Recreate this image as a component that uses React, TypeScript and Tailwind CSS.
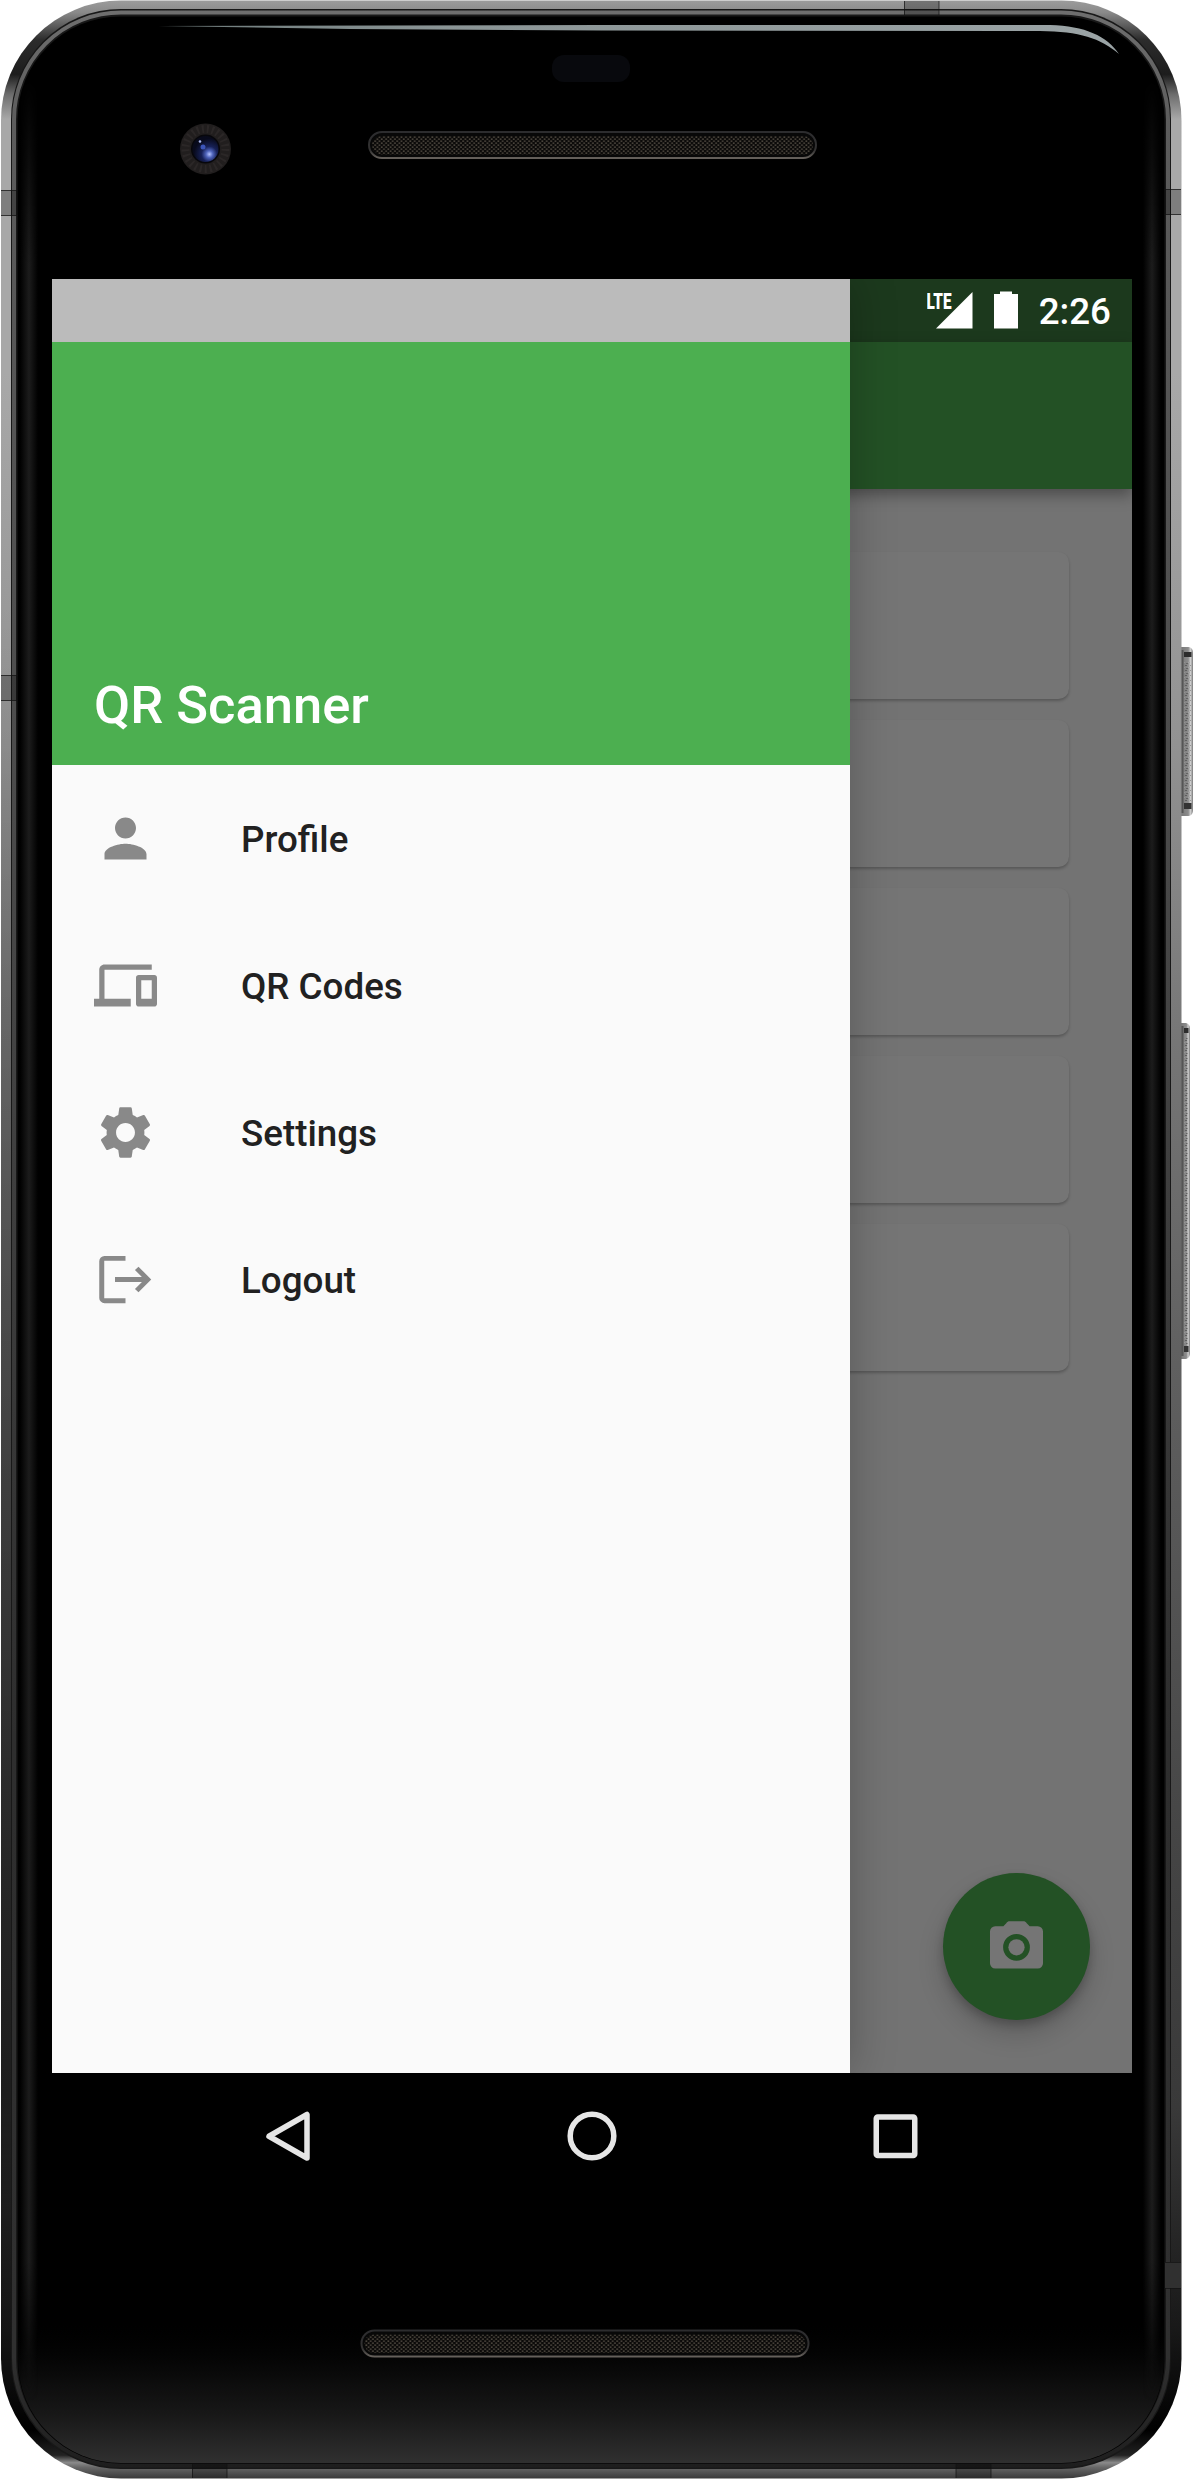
import React from "react";
import { MdPerson, MdDevices, MdSettings } from "react-icons/md";

function LogoutIcon() {
  return (
    <svg viewBox="0 0 24 24" className="size-[63px]" fill="currentColor">
      <path d="M12 3H4a2 2 0 0 0-2 2v14a2 2 0 0 0 2 2h8v-1.9H3.900V4.900H12z" />
      <path d="M16.95 7.1 21.8 12l-4.85 4.9-1.35-1.3 2.65-2.650H8v-1.900h10.250L15.6 8.4z" />
    </svg>
  );
}

function CameraIcon() {
  return (
    <svg viewBox="0 0 24 24" className="size-[63px] text-[#757575]" fill="currentColor">
      <path
        fillRule="evenodd"
        d="M9.4 2.4h5.2c.6 0 .9.2 1.3.7l1.1 1.2h3.1a2 2 0 0 1 2 2v12.1a2 2 0 0 1-2 2H3.9a2 2 0 0 1-2-2V6.300a2 2 0 0 1 2-2H7l1.100-1.200c.4-.5.7-.7 1.300-.7zM12 7.200a5.100 5.100 0 1 0 0 10.200a5.100 5.100 0 1 0 0-10.200z"
      />
      <circle cx="12" cy="12.300" r="3.100" />
    </svg>
  );
}

const items = [
  { label: "Profile", icon: <MdPerson className="size-[63px]" /> },
  { label: "QR Codes", icon: <MdDevices className="size-[63px]" /> },
  { label: "Settings", icon: <MdSettings className="size-[63px]" /> },
  { label: "Logout", icon: <LogoutIcon /> },
];

function Speaker({ x, y }: { x: number; y: number }) {
  return (
    <g>
      <rect x={x + 1} y={y + 1} width="447" height="26" rx="13" fill="#080808" stroke="url(#lip)" strokeWidth="2" />
      <rect x={x + 4} y={y + 5} width="441" height="18.500" rx="9" fill="#0b0a09" />
      <rect x={x + 4} y={y + 5} width="441" height="18.500" rx="9" fill="url(#mesh)" />
    </g>
  );
}

function SideButton({ y, h, w }: { y: number; h: number; w: number }) {
  return (
    <g>
      <path d={`M1181 ${y}h${w - 4}q4 1 4 6v${h - 12}q0 5 -4 6h-${w - 4}z`} fill="url(#btn)" />
      <rect x="1181" y={y + 3} width="2.500" height={h - 6} fill="#555" />
      <rect x="1184.500" y={y + 15} width={w - 6} height={h - 30} fill="url(#grain)" />
      <rect x="1184" y={y + 5} width={w - 4.5} height="5" fill="#2c2c2c" />
      <rect x="1184" y={y + h - 13} width={w - 4.5} height="6" fill="#333" />
    </g>
  );
}

function DeviceFrame() {
  return (
    <svg viewBox="0 0 1194 2480" className="absolute inset-0 h-[2480px] w-[1194px]" aria-hidden="true">
      <defs>
        <linearGradient id="rim" gradientUnits="userSpaceOnUse" x1="0" y1="0" x2="0" y2="2480">
          <stop offset="0" stopColor="#9c9c9c" />
          <stop offset="0.005" stopColor="#8a8a8a" />
          <stop offset="0.016" stopColor="#2c2c2c" />
          <stop offset="0.030" stopColor="#1d1d1d" />
          <stop offset="0.038" stopColor="#6c6c6c" />
          <stop offset="0.048" stopColor="#a8a8a8" />
          <stop offset="0.150" stopColor="#a8a8a8" />
          <stop offset="0.300" stopColor="#929292" />
          <stop offset="0.420" stopColor="#767676" />
          <stop offset="0.550" stopColor="#606060" />
          <stop offset="0.750" stopColor="#444" />
          <stop offset="0.850" stopColor="#393939" />
          <stop offset="0.940" stopColor="#181818" />
          <stop offset="0.980" stopColor="#000" />
          <stop offset="0.990" stopColor="#222" />
          <stop offset="0.993" stopColor="#8a8a8a" />
          <stop offset="0.995" stopColor="#666" />
          <stop offset="1" stopColor="#333" />
        </linearGradient>
        <linearGradient id="leftShade" gradientUnits="userSpaceOnUse" x1="0" y1="600" x2="0" y2="2360">
          <stop offset="0" stopColor="#000" stopOpacity="0" />
          <stop offset="0.500" stopColor="#000" stopOpacity="0.300" />
          <stop offset="0.850" stopColor="#000" stopOpacity="0.500" />
          <stop offset="1" stopColor="#000" stopOpacity="0.100" />
        </linearGradient>
        <linearGradient id="ring" gradientUnits="userSpaceOnUse" x1="0" y1="0" x2="0" y2="2480">
          <stop offset="0" stopColor="#707070" />
          <stop offset="0.050" stopColor="#5c5c5c" />
          <stop offset="0.300" stopColor="#4c4c4c" />
          <stop offset="0.700" stopColor="#2e2e2e" />
          <stop offset="0.950" stopColor="#303030" />
          <stop offset="1" stopColor="#1c1c1c" />
        </linearGradient>
        <linearGradient id="sheen" x1="0" y1="0" x2="1" y2="0">
          <stop offset="0" stopColor="#1c1c1c" stopOpacity="0" />
          <stop offset="0.500" stopColor="#1c1c1c" />
          <stop offset="1" stopColor="#1c1c1c" stopOpacity="0" />
        </linearGradient>
        <linearGradient id="sheenFade" x1="0" y1="0" x2="0" y2="1">
          <stop offset="0" stopColor="#000" />
          <stop offset="0.080" stopColor="#fff" />
          <stop offset="0.940" stopColor="#fff" />
          <stop offset="1" stopColor="#000" />
        </linearGradient>
        <mask id="sheenMask" maskUnits="userSpaceOnUse" x="0" y="0" width="1194" height="2480">
          <rect x="0" y="80" width="1194" height="2320" fill="url(#sheenFade)" />
        </mask>
        <linearGradient id="chin" x1="0" y1="0" x2="0" y2="1">
          <stop offset="0" stopColor="#000" stopOpacity="0" />
          <stop offset="0.300" stopColor="#060606" />
          <stop offset="0.650" stopColor="#171717" />
          <stop offset="1" stopColor="#303030" />
        </linearGradient>
        <linearGradient id="lip" x1="0" y1="0" x2="0" y2="1">
          <stop offset="0" stopColor="#2c2c2e" />
          <stop offset="0.700" stopColor="#333232" />
          <stop offset="1" stopColor="#65605b" />
        </linearGradient>
        <linearGradient id="btn" x1="0" y1="0" x2="1" y2="0">
          <stop offset="0" stopColor="#777" />
          <stop offset="0.600" stopColor="#8c8c8c" />
          <stop offset="0.800" stopColor="#d0d0d0" />
          <stop offset="1" stopColor="#777" />
        </linearGradient>
        <linearGradient id="glint" x1="0" y1="0" x2="1" y2="0">
          <stop offset="0" stopColor="#6d7a7a" />
          <stop offset="0.300" stopColor="#8a9495" />
          <stop offset="1" stopColor="#9ba4a6" />
        </linearGradient>
        <radialGradient id="lens" cx="0.650" cy="0.700" r="0.600">
          <stop offset="0" stopColor="#b4c3ff" />
          <stop offset="0.220" stopColor="#4f64bb" />
          <stop offset="0.500" stopColor="#172157" />
          <stop offset="1" stopColor="#080a1b" />
        </radialGradient>
        <pattern id="mesh" width="4.400" height="4" patternUnits="userSpaceOnUse">
          <rect x="0.300" y="0.400" width="1.700" height="1.500" fill="#504a41" />
          <rect x="2.500" y="2.400" width="1.700" height="1.500" fill="#504a41" />
        </pattern>
        <pattern id="grain" width="5" height="5" patternUnits="userSpaceOnUse">
          <rect width="2" height="1" fill="#5f5f5f" />
          <rect x="3" y="2" width="2" height="1" fill="#a5a5a5" />
          <rect x="1" y="3" width="2" height="1" fill="#636363" />
        </pattern>
        <clipPath id="glass">
          <rect x="18" y="17" width="1146" height="2446" rx="103" />
        </clipPath>
      </defs>

      <SideButton y={647} h={169} w={12} />
      <SideButton y={1023} h={336} w={9} />

      <rect x="1" y="0.500" width="1180.500" height="2478" rx="120" fill="url(#rim)" />
      <rect x="1" y="600" width="14" height="1760" fill="url(#leftShade)" />
      <rect x="11" y="9" width="1160" height="2460" rx="110" fill="#181818" />
      <rect x="14" y="12.500" width="1154" height="2453" rx="107" fill="none" stroke="url(#ring)" strokeWidth="4" />
      <rect x="17.500" y="16.500" width="1147" height="2447" rx="103" fill="#000" />

      <g clipPath="url(#glass)">
        <rect x="18" y="2320" width="1146" height="143" fill="url(#chin)" />
        <g mask="url(#sheenMask)">
          <rect x="20" y="80" width="18" height="2320" fill="url(#sheen)" />
          <rect x="1143" y="80" width="18" height="2320" fill="url(#sheen)" />
        </g>
      </g>

      {/* antenna bands */}
      <g fill="#000" fillOpacity="0.250">
        <rect x="1" y="190" width="16" height="26" />
        <rect x="1" y="675" width="16" height="26" />
        <rect x="1165" y="189" width="16" height="26" />
        <rect x="904" y="1" width="35" height="14" />
        <rect x="192" y="2464" width="35" height="14" />
        <rect x="956" y="2464" width="35" height="14" />
      </g>
      <rect x="1165" y="2262" width="16" height="26" fill="#303030" />
      <path
        d="M1 190.500h17M1 215.500h17M1 675.500h17M1 700.500h17M1164 189.500h17M1164 214.500h17M1164 2262.500h17M1164 2288.500h17M904.500 1v14M939 1v14M192.500 2464v14M227 2464v14M956 2464v14M991 2464v14"
        stroke="#111"
        strokeOpacity="0.700"
        fill="none"
      />

      <path
        d="M158 26 L600 25 L1050 25 C1085 26 1107 36 1119 54 C1100 38 1080 31.500 1040 31 L600 30.500 L350 29 Z"
        fill="url(#glint)"
      />
      <rect x="552" y="55" width="78" height="27" rx="12" fill="#08090d" />

      <circle cx="205.500" cy="149" r="25.500" fill="#211e1e" />
      <circle cx="205.500" cy="149" r="20" fill="none" stroke="#2b2727" strokeWidth="8" strokeDasharray="2 3" />
      <circle cx="205.500" cy="149" r="14.500" fill="#07070b" />
      <circle cx="205.500" cy="149" r="13" fill="url(#lens)" />
      <circle cx="203" cy="147" r="2.500" fill="#3c55b8" />
      <circle cx="200" cy="141.500" r="1.300" fill="#a9b7ee" />

      <Speaker x={368} y={131} />
      <Speaker x={360.5} y={2329.5} />
    </svg>
  );
}

function StatusIcons() {
  return (
    <div className="flex h-[63px] items-center justify-end bg-[#1c391d] pr-[21px]">
      <svg viewBox="0 0 92 63" className="h-[63px] w-[92px]" fill="#fff">
        <path d="M45.500 13v36.500H9z" />
        <text
          x="-0.500"
          y="29.500"
          fontFamily="Roboto, sans-serif"
          fontWeight="900"
          fontSize="22.500"
          textLength="25"
          lengthAdjust="spacingAndGlyphs"
        >
          LTE
        </text>
        <path d="M73 12.500h12v2.500h6v34.500H67V15h6z" />
      </svg>
      <span className="ml-[19.500px] pt-[3px] text-[36.750px] leading-[60px] font-medium text-white">2:26</span>
    </div>
  );
}

export default function App() {
  return (
    <div className="relative h-[2480px] w-[1194px] overflow-hidden bg-white font-['Roboto',sans-serif]">
      <DeviceFrame />
      <div className="relative ml-[52px] w-[1080px] pt-[279px]">
        <div className="relative flex h-[1794px] flex-col overflow-hidden bg-[#737373]">
          <StatusIcons />
          <header className="h-[147px] shrink-0 bg-[#235125] shadow-[0_6px_14px_rgba(0,0,0,0.35)]" />
          <main className="flex flex-col gap-[21px] px-[63px] pt-[63px]">
            {[0, 1, 2, 3, 4].map((n) => (
              <div
                key={n}
                className="h-[147px] rounded-[10.500px] bg-[#757575] shadow-[0_2px_3px_rgba(0,0,0,0.24)]"
              />
            ))}
          </main>
          <button className="absolute right-[42px] bottom-[53px] flex size-[147px] items-center justify-center rounded-full bg-[#235125] shadow-[0_14px_26px_rgba(0,0,0,0.18),0_5px_10px_rgba(0,0,0,0.2)]">
            <CameraIcon />
          </button>

          <aside className="absolute inset-y-0 left-0 flex w-[798px] flex-col bg-[#fafafa] shadow-[0_0_42px_rgba(0,0,0,0.25)]">
            <div className="h-[63px] bg-[#bbbbbb]" />
            <div className="flex h-[422.500px] items-end bg-[#4caf50] px-[42px] pb-[29px]">
              <h1 className="text-[52.500px] leading-[62px] font-medium text-white">QR Scanner</h1>
            </div>
            <nav>
              {items.map((item) => (
                <a key={item.label} className="flex h-[147px] items-center gap-[84px] px-[42px] text-[#898989]">
                  {item.icon}
                  <span className="pt-[3px] text-[36.750px] leading-[44px] font-medium text-[#212121]">
                    {item.label}
                  </span>
                </a>
              ))}
            </nav>
          </aside>
        </div>

        <div className="flex h-[126px] items-center justify-center gap-[240.500px]">
          <svg viewBox="0 0 63 63" className="size-[63px]" fill="none" stroke="#e6e6e6" strokeWidth="5.500">
            <path d="M50 9.500v43.500L12 31.250z" strokeLinejoin="round" />
          </svg>
          <svg viewBox="0 0 63 63" className="size-[63px]" fill="none" stroke="#e6e6e6" strokeWidth="5.500">
            <circle cx="31" cy="31" r="21.800" />
          </svg>
          <svg viewBox="0 0 63 63" className="size-[63px]" fill="none" stroke="#e6e6e6" strokeWidth="5.500">
            <rect x="12.250" y="12" width="38.500" height="38.500" rx="1.500" />
          </svg>
        </div>
      </div>
    </div>
  );
}
